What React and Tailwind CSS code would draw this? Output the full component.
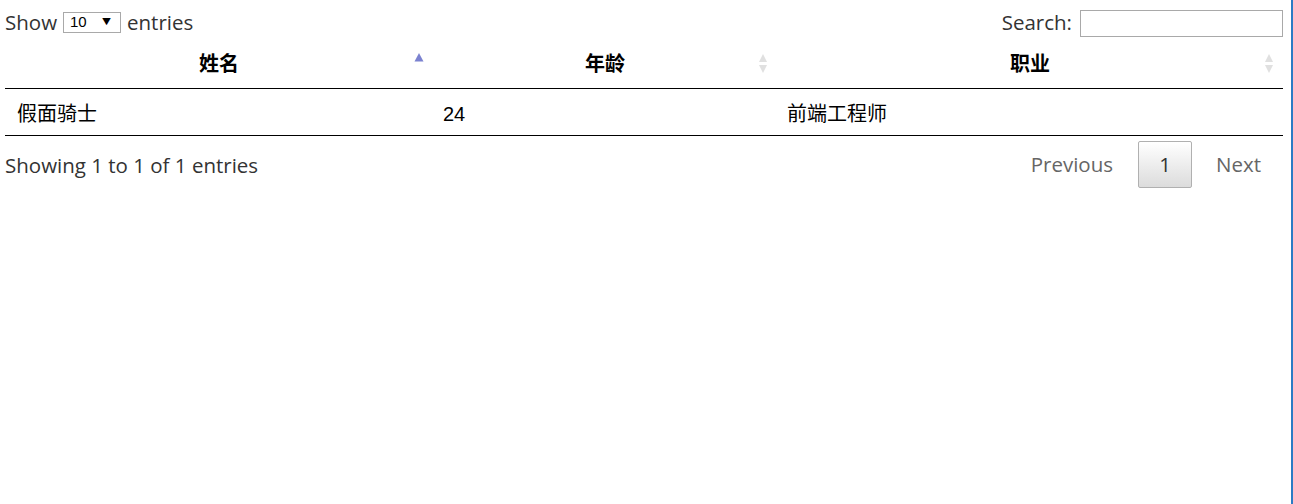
import React from 'react';

const rows = [{ name: '假面骑士', age: '24', job: '前端工程师' }];

function SortIcon({ active }) {
  return (
    <svg width="10" height="22" viewBox="0 0 10 22" className="absolute right-[9px] top-[8px]">
      {active ? (
        <path d="M0.5 9.5 L5 1 L9.5 9.5 Z" fill="#7b82d0" />
      ) : (
        <>
          <path d="M1 10 L5 2 L9 10 Z" fill="#e0e0e0" />
          <path d="M1 13 L5 21 L9 13 Z" fill="#e0e0e0" />
        </>
      )}
    </svg>
  );
}

export default function App() {
  return (
    <div className="min-h-[504px] w-full border-r-[2px] border-[#2b7bc4] bg-white">
      <div
        className="pl-[5px] pr-[8px] text-[#333]"
        style={{ fontFamily: '"Open Sans", "Noto Sans CJK SC", sans-serif' }}
      >
        <div className="flex h-[44px] items-center justify-between text-[20.5px]">
          <div className="flex items-center">
            <span>Show</span>
            <div className="relative mx-[6px] flex h-[21px] w-[58px] items-center border border-[#a9a9a9] bg-white pl-[6px] text-[15px] text-black">
              <span style={{ fontFamily: '"Liberation Sans", Arial, sans-serif' }}>10</span>
              <span className="absolute right-[9px] top-[2px] text-[9px]">▼</span>
            </div>
            <span>entries</span>
          </div>
          <div className="flex items-center">
            <span>Search:</span>
            <input className="ml-[8px] mt-[3px] h-[27px] w-[203px] border border-[#a9a9a9] bg-white outline-none" />
          </div>
        </div>

        <table className="w-full border-collapse text-black">
          <thead>
            <tr className="h-[44px] border-b border-black">
              <th className="relative w-[428px] px-[18px] pb-[4px] text-center text-[20px] font-bold">
                姓名
                <SortIcon active />
              </th>
              <th className="relative w-[344px] px-[18px] pb-[4px] text-center text-[20px] font-bold">
                年龄
                <SortIcon />
              </th>
              <th className="relative px-[18px] pb-[4px] text-center text-[20px] font-bold">
                职业
                <SortIcon />
              </th>
            </tr>
          </thead>
          <tbody style={{ fontFamily: '"Liberation Sans", "Noto Sans CJK SC", sans-serif' }}>
            {rows.map((r) => (
              <tr key={r.name} className="h-[47px] border-b border-black text-[20px]">
                <td className="px-[12px] pt-[5px]">{r.name}</td>
                <td className="px-[10px] pt-[5px]">{r.age}</td>
                <td className="px-[10px] pt-[5px]">{r.job}</td>
              </tr>
            ))}
          </tbody>
        </table>

        <div className="flex items-start justify-between text-[20.5px]">
          <div className="pt-[15px] leading-[28px]">Showing 1 to 1 of 1 entries</div>
          <div className="mt-[5px] flex items-center">
            <span className="pr-[25px] leading-[47px] text-[#666]">Previous</span>
            <span className="flex h-[47px] w-[54px] items-center justify-center rounded-[2px] border border-[#b0b0b0] bg-gradient-to-b from-white to-[#dcdcdc] text-[#333]">
              1
            </span>
            <span className="pl-[24px] pr-[22px] leading-[47px] text-[#666]">Next</span>
          </div>
        </div>
      </div>
    </div>
  );
}
